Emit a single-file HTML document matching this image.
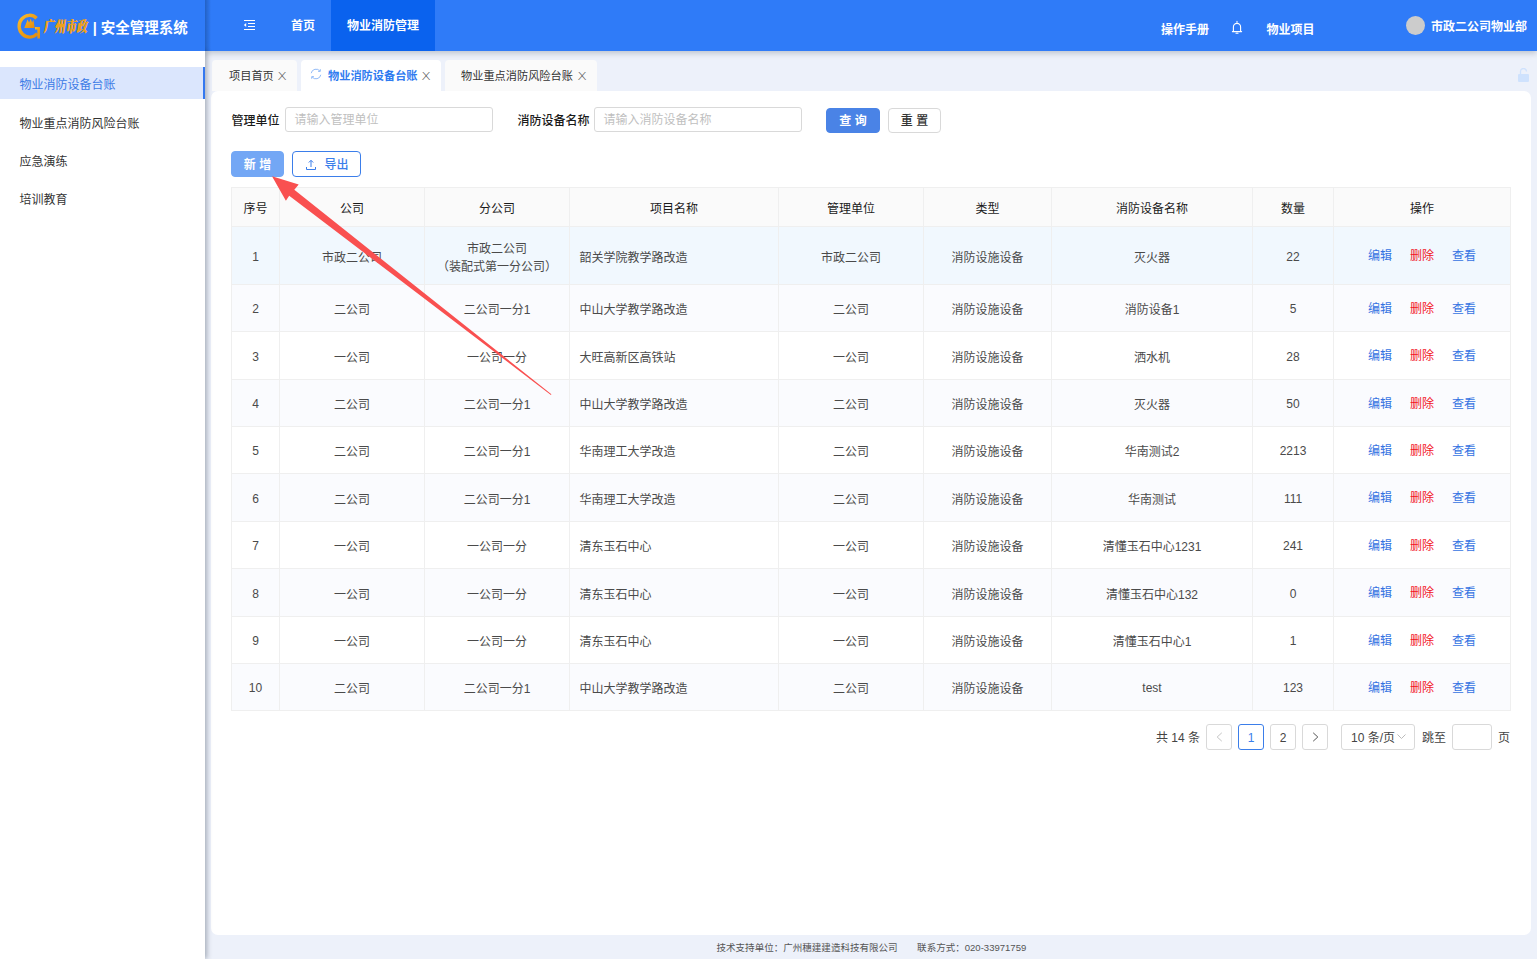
<!DOCTYPE html>
<html lang="zh-CN">
<head>
<meta charset="utf-8">
<title>安全管理系统</title>
<style>
*{box-sizing:border-box;margin:0;padding:0}
html,body{width:1537px;height:959px;overflow:hidden}
body{font-family:"Liberation Sans","Noto Sans CJK SC",sans-serif;font-size:12px;color:#333;background:#edf1fa;position:relative}
.abs{position:absolute}
#header{position:absolute;left:0;top:0;width:1537px;height:51px;background:#2f7bf8;box-shadow:0 2px 6px rgba(0,21,41,.22);z-index:5}
#logo{position:absolute;left:0;top:0;width:205px;height:51px;background:#2f7bf8;z-index:7}
#sider{position:absolute;left:0;top:51px;width:205px;height:908px;background:#fff;box-shadow:2px 0 5px rgba(0,21,41,.30);z-index:6}
#logo:after{content:"";position:absolute;right:-6px;top:0;width:6px;height:51px;background:linear-gradient(90deg,rgba(0,21,41,.25),rgba(0,21,41,0))}
.menu{position:absolute;left:0;width:205px;height:32px;line-height:36px;padding-left:19.500px;font-size:12px;color:#333}
.menu.on{background:#dbe6fd;color:#3d7be6;border-right:2px solid #3478f0}
.topm{position:absolute;top:0;height:51px;line-height:53px;color:#fff;font-weight:bold;font-size:12px;text-align:center}
.tab{position:absolute;top:60px;height:31px;line-height:32px;background:#fafafa;border-radius:4px 4px 0 0;font-size:11.200px;color:#333;white-space:nowrap}
.tab.on{background:#fff;color:#2f7bf0;font-weight:bold}
.tab .x{position:absolute;top:0;font-family:"DejaVu Sans","Liberation Sans",sans-serif;font-size:11.500px;color:#555;font-weight:200;transform:scale(1.22,0.9);transform-origin:50% 55%}
#panel{position:absolute;left:211px;top:91px;width:1320px;height:844px;background:#fff;border-radius:7px}
.lbl{position:absolute;font-size:12px;font-weight:500;color:#1a1a1a;line-height:20px;white-space:nowrap}
.inp{position:absolute;height:25px;border:1px solid #d9d9d9;border-radius:3px;background:#fff;font-size:12px;color:#bfbfbf;line-height:25px;padding-left:8.500px}
.btn{position:absolute;height:26px;line-height:26px;border-radius:4px;font-weight:500;font-size:12px;text-align:center;border:1px solid #d9d9d9;background:#fff;color:#333;white-space:nowrap}
.btn.pri{background:#4a83e6;border-color:#4a83e6;color:#fff;font-weight:bold}
table{position:absolute;left:231px;top:187px;border-collapse:collapse;table-layout:fixed;width:1279px;font-size:12px}
th,td{border:1px solid #efefef;text-align:center;padding:0;color:#4a4a4a;font-weight:normal;overflow:hidden;white-space:nowrap}
th{height:39px;background:#fafafa;color:#1a1a1a;font-weight:400;padding-top:1px}
td{padding-top:1px}
td.n{padding-top:2px}
td.op{padding-top:0;padding-bottom:2px}
tr.r1 td{background:#f1f8fe}
td.two{line-height:18px;padding-top:5px}
tr.ev td{background:#fafbfe}
td.l{text-align:left;padding-left:9.400px}
.op a{display:inline-block;color:#3573e2;text-decoration:none}
.op a.del{color:#f2141f}
.pg{position:absolute;top:724px;height:26px;line-height:26px;border:1px solid #d9d9d9;border-radius:3px;background:#fff;text-align:center;font-size:12px;color:#444}
.pt{position:absolute;top:724px;height:26px;line-height:29px;font-size:12px;color:#444;white-space:nowrap}
#footer{position:absolute;left:716.5px;top:941px;height:14px;line-height:14px;font-size:9.54px;color:#555;white-space:nowrap}
</style>
</head>
<body>
<div id="header">
<svg class="abs" style="left:243px;top:19px" width="13" height="12" viewBox="0 0 13 12"><g stroke="#fff" stroke-width="1.1" fill="none"><path d="M1 1.5h11M5 4.5h7M5 7.5h7M1 10.5h11"/></g><path d="M3.2 4v4L0.8 6z" fill="#fff"/></svg>
<div class="topm" style="left:279px;width:48px">首页</div>
<div class="topm" style="left:331px;width:104px;background:#0a62ee">物业消防管理</div>
<div class="topm" style="left:1155px;width:60px;top:4px">操作手册</div>
<svg class="abs" style="left:1230px;top:20px" width="14" height="16" viewBox="0 0 14 16"><path d="M7 1.2v1.3M3.4 11.5V7a3.6 3.600 0 0 1 7.200 0v4.500M2.400 11.600h9.200M6 13.200h2" stroke="#fff" stroke-width="1.100" fill="none" stroke-linecap="round"/></svg>
<div class="topm" style="left:1260.500px;width:60px;top:4px">物业项目</div>
<div class="abs" style="left:1406px;top:16px;width:19px;height:19px;border-radius:50%;background:#ccc"></div>
<div class="topm" style="left:1431px;width:96px;line-height:54px">市政二公司物业部</div>
</div>
<div id="logo">
<svg class="abs" style="left:17px;top:12px" width="25" height="28" viewBox="0 0 25 28"><defs><linearGradient id="gd" x1="0" y1="0" x2="1" y2="1"><stop offset="0" stop-color="#f8bd2e"/><stop offset="0.500" stop-color="#ee9d16"/><stop offset="1" stop-color="#e08c12"/></linearGradient></defs><path d="M19.600 6.200A10.400 10.900 0 1 0 20.300 21.500" fill="none" stroke="url(#gd)" stroke-width="3.400"/><path d="M18 15h5v11.500h-2.600V17.400H18z" fill="url(#gd)"/><path d="M7.300 16L10.600 7.500l1.500 3.300 1.600-4 1.400 3.600 1.300-2.600 1.300 8.200z" fill="url(#gd)"/></svg>
<div class="abs" style="left:43.800px;top:18px;width:48px;height:20px;line-height:20px;text-shadow:0.400px 0 0 #eea11c;font-family:'Liberation Serif','Noto Serif CJK SC',serif;font-weight:900;font-size:10.5px;color:#eea11c;letter-spacing:0.500px;white-space:nowrap;transform-origin:0 50%;transform:scaleY(1.45) skewX(-12deg)">广州市政</div>
<div class="abs" style="left:92.7px;top:15.5px;height:24px;line-height:24px;font-size:14.5px;font-weight:bold;color:#fff;white-space:nowrap">| 安全管理系统</div>
</div>
<div id="sider">
<div class="menu on" style="top:16px">物业消防设备台账</div>
<div class="menu" style="top:55px">物业重点消防风险台账</div>
<div class="menu" style="top:93px">应急演练</div>
<div class="menu" style="top:131px">培训教育</div>
</div>
<div class="tab" style="left:212px;width:85px;padding-left:17px">项目首页<span class="x" style="left:66.300px">X</span></div>
<div class="tab on" style="left:301px;width:140px;padding-left:27px">物业消防设备台账<span class="x" style="left:121.300px">X</span>
<svg class="abs" style="left:8.500px;top:8px" width="12" height="12" viewBox="0 0 12 12"><g fill="none" stroke="#93bcf8" stroke-width="1"><path d="M1.200 5.200A4.900 4.900 0 0 1 10 3.200"/><path d="M10.800 6.800A4.900 4.900 0 0 1 2 8.800"/><path d="M10.300 1.200V3.400H8.100"/><path d="M1.700 10.800V8.600H3.900"/></g></svg></div>
<div class="tab" style="left:445px;width:152px;padding-left:16px">物业重点消防风险台账<span class="x" style="left:133px">X</span></div>
<svg class="abs" style="left:1517px;top:68px" width="13" height="14" viewBox="0 0 13 14"><rect x="1" y="6" width="11" height="8" rx="1" fill="#cfe2fd"/><path d="M3.500 6V3.500a3 3 0 0 1 6 0" fill="none" stroke="#cfe2fd" stroke-width="1.300"/></svg>
<div id="panel"></div>
<div class="lbl" style="left:231.500px;top:111px">管理单位</div>
<div class="inp" style="left:285px;top:107px;width:208px">请输入管理单位</div>
<div class="lbl" style="left:517.500px;top:111px">消防设备名称</div>
<div class="inp" style="left:594px;top:107px;width:208px">请输入消防设备名称</div>
<div class="btn pri" style="left:826px;top:108px;width:54px;height:25px;line-height:24px">查 询</div>
<div class="btn" style="left:888px;top:108px;width:53px;height:25px;line-height:24px">重 置</div>
<div class="btn pri" style="left:231px;top:151px;width:53px;background:#73a7f5;border-color:#73a7f5">新 增</div>
<div class="btn" style="left:292px;top:151px;width:69px;border-color:#3b7eea;color:#3b7eea;padding-left:20px">导出<svg class="abs" style="left:12px;top:6.500px" width="12" height="12" viewBox="0 0 12 12"><path d="M6 8V1.500M3.800 3.500L6 1.300l2.200 2.200M1.500 8v2.500h9V8" fill="none" stroke="#3b7eea" stroke-width="1"/></svg></div>
<table><colgroup><col style="width:48px"><col style="width:145px"><col style="width:145px"><col style="width:209px"><col style="width:145px"><col style="width:128px"><col style="width:201px"><col style="width:81px"><col style="width:177px"></colgroup>
<tr><th>序号</th><th>公司</th><th>分公司</th><th>项目名称</th><th>管理单位</th><th>类型</th><th>消防设备名称</th><th>数量</th><th>操作</th></tr>
<tr class="r1" style="height:58px"><td class="n">1</td><td>市政二公司</td><td class="two">市政二公司<br>（装配式第一分公司）</td><td class="l">韶关学院教学路改造</td><td>市政二公司</td><td>消防设施设备</td><td>灭火器</td><td class="n">22</td><td class="op"><a style="margin-right:18px">编辑</a><a class="del" style="margin-right:18px">删除</a><a>查看</a></td></tr>
<tr class="ev" style="height:47px"><td class="n">2</td><td>二公司</td><td>二公司一分1</td><td class="l">中山大学教学路改造</td><td>二公司</td><td>消防设施设备</td><td>消防设备1</td><td class="n">5</td><td class="op"><a style="margin-right:18px">编辑</a><a class="del" style="margin-right:18px">删除</a><a>查看</a></td></tr>
<tr class="" style="height:48px"><td class="n">3</td><td>一公司</td><td>一公司一分</td><td class="l">大旺高新区高铁站</td><td>一公司</td><td>消防设施设备</td><td>洒水机</td><td class="n">28</td><td class="op"><a style="margin-right:18px">编辑</a><a class="del" style="margin-right:18px">删除</a><a>查看</a></td></tr>
<tr class="ev" style="height:47px"><td class="n">4</td><td>二公司</td><td>二公司一分1</td><td class="l">中山大学教学路改造</td><td>二公司</td><td>消防设施设备</td><td>灭火器</td><td class="n">50</td><td class="op"><a style="margin-right:18px">编辑</a><a class="del" style="margin-right:18px">删除</a><a>查看</a></td></tr>
<tr class="" style="height:47px"><td class="n">5</td><td>二公司</td><td>二公司一分1</td><td class="l">华南理工大学改造</td><td>二公司</td><td>消防设施设备</td><td>华南测试2</td><td class="n">2213</td><td class="op"><a style="margin-right:18px">编辑</a><a class="del" style="margin-right:18px">删除</a><a>查看</a></td></tr>
<tr class="ev" style="height:48px"><td class="n">6</td><td>二公司</td><td>二公司一分1</td><td class="l">华南理工大学改造</td><td>二公司</td><td>消防设施设备</td><td>华南测试</td><td class="n">111</td><td class="op"><a style="margin-right:18px">编辑</a><a class="del" style="margin-right:18px">删除</a><a>查看</a></td></tr>
<tr class="" style="height:47px"><td class="n">7</td><td>一公司</td><td>一公司一分</td><td class="l">清东玉石中心</td><td>一公司</td><td>消防设施设备</td><td>清懂玉石中心1231</td><td class="n">241</td><td class="op"><a style="margin-right:18px">编辑</a><a class="del" style="margin-right:18px">删除</a><a>查看</a></td></tr>
<tr class="ev" style="height:48px"><td class="n">8</td><td>一公司</td><td>一公司一分</td><td class="l">清东玉石中心</td><td>一公司</td><td>消防设施设备</td><td>清懂玉石中心132</td><td class="n">0</td><td class="op"><a style="margin-right:18px">编辑</a><a class="del" style="margin-right:18px">删除</a><a>查看</a></td></tr>
<tr class="" style="height:47px"><td class="n">9</td><td>一公司</td><td>一公司一分</td><td class="l">清东玉石中心</td><td>一公司</td><td>消防设施设备</td><td>清懂玉石中心1</td><td class="n">1</td><td class="op"><a style="margin-right:18px">编辑</a><a class="del" style="margin-right:18px">删除</a><a>查看</a></td></tr>
<tr class="ev" style="height:47px"><td class="n">10</td><td>二公司</td><td>二公司一分1</td><td class="l">中山大学教学路改造</td><td>二公司</td><td>消防设施设备</td><td>test</td><td class="n">123</td><td class="op"><a style="margin-right:18px">编辑</a><a class="del" style="margin-right:18px">删除</a><a>查看</a></td></tr>
</table>
<div class="pt" style="left:1156px">共 14 条</div>
<div class="pg" style="left:1206px;width:26px"><svg class="abs" style="left:9px;top:7px" width="7" height="10" viewBox="0 0 7 10"><path d="M5.800 0.800L1.200 5l4.600 4.200" fill="none" stroke="#c4c4c4" stroke-width="1"/></svg></div>
<div class="pg" style="left:1238px;width:26px;border-color:#3b7eea;color:#3b7eea">1</div>
<div class="pg" style="left:1270px;width:26px">2</div>
<div class="pg" style="left:1302px;width:26px"><svg class="abs" style="left:9px;top:7px" width="7" height="10" viewBox="0 0 7 10"><path d="M1.200 0.800L5.800 5L1.200 9.200" fill="none" stroke="#555" stroke-width="1"/></svg></div>
<div class="pg" style="left:1341px;width:74px;text-align:left;padding-left:9px">10 条/页<svg class="abs" style="left:55px;top:9px" width="9" height="6" viewBox="0 0 9 6"><path d="M0.500 0.500l4 4 4-4" fill="none" stroke="#bbb" stroke-width="1"/></svg></div>
<div class="pt" style="left:1422px">跳至</div>
<div class="pg" style="left:1452px;width:40px"></div>
<div class="pt" style="left:1498px">页</div>
<svg class="abs" style="left:260px;top:170px;z-index:4" width="300" height="230" viewBox="260 170 300 230"><path d="M272 176.300L298.700 184.600L294.300 189.800L551.400 394.300L550.900 394.900L289.200 195.700L285.900 200.800Z" fill="#f95050"/></svg>
<div id="footer">技术支持单位：广州穗建建造科技有限公司<span style="margin-left:19.5px">联系方式：020-33971759</span></div>
</body>
</html>
